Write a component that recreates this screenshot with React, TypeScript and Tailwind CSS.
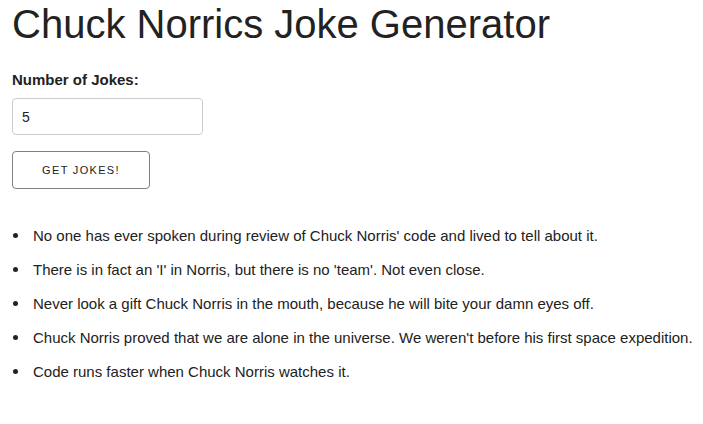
import React, { useState } from 'react';

const jokes = [
  "No one has ever spoken during review of Chuck Norris' code and lived to tell about it.",
  "There is in fact an 'I' in Norris, but there is no 'team'. Not even close.",
  'Never look a gift Chuck Norris in the mouth, because he will bite your damn eyes off.',
  "Chuck Norris proved that we are alone in the universe. We weren't before his first space expedition.",
  'Code runs faster when Chuck Norris watches it.',
];

const App: React.FC = () => {
  const [count, setCount] = useState('5');

  return (
    <div className="min-h-screen bg-white pl-3 text-[#222] font-['Liberation_Sans',Arial,sans-serif]">
      <h1 className="pt-[1px] text-[40px] leading-[46px] font-normal">Chuck Norrics Joke Generator</h1>

      <label className="mt-[25px] block text-[15px] leading-4 font-bold">Number of Jokes:</label>
      <input
        type="number"
        value={count}
        onChange={(e) => setCount(e.target.value)}
        className="mt-[10px] block h-[37px] w-[191px] rounded border border-[#ccc] pl-[9px] pr-2 text-[14px] text-[#222] outline-none"
      />

      <button className="mt-4 block h-[38px] w-[138px] rounded border border-[#808080] bg-white text-[11px] tracking-[0.12em] text-[#222]">
        GET JOKES!
      </button>

      <ul className="mt-[38px] text-[15px] leading-[17px]">
        {jokes.map((joke) => (
          <li key={joke} className="mb-[17px] flex items-center whitespace-nowrap">
            <span className="ml-[1px] mr-[15px] h-[5px] w-[5px] shrink-0 rounded-full bg-[#222]" />
            {joke}
          </li>
        ))}
      </ul>
    </div>
  );
};

export default App;
